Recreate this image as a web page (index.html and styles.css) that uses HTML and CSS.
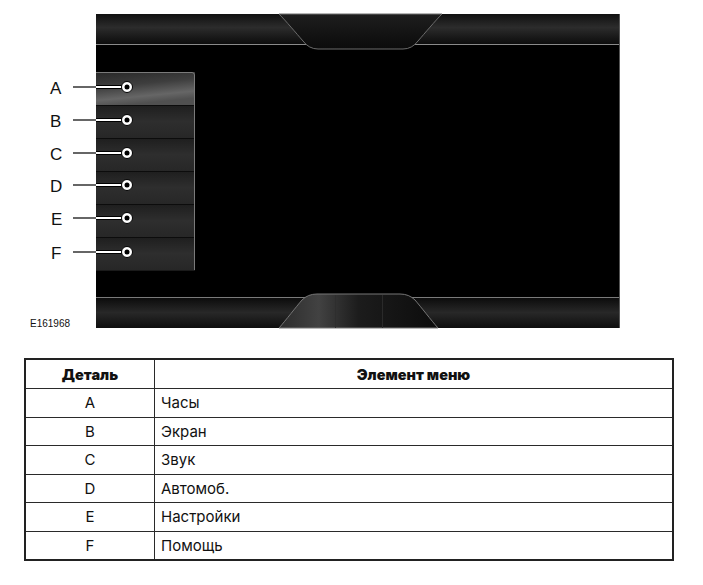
FILE: index.html
```html
<!DOCTYPE html>
<html>

<head>
  <meta charset="utf-8">
  <title>Меню</title>
  <link rel="stylesheet" href="styles.css">
</head>

<body>
  <div class="figure">
    <svg class="screen" width="703" height="340" viewBox="0 0 703 340">
      <defs>
        <linearGradient id="bar-top" x1="0" y1="0" x2="0" y2="1">
          <stop offset="0" stop-color="#101010" />
          <stop offset="0.45" stop-color="#2c2c2c" />
          <stop offset="1" stop-color="#0c0c0c" />
        </linearGradient>
        <linearGradient id="bar-bottom" x1="0" y1="0" x2="0" y2="1">
          <stop offset="0" stop-color="#0a0a0a" />
          <stop offset="0.5" stop-color="#282828" />
          <stop offset="1" stop-color="#0e0e0e" />
        </linearGradient>
        <linearGradient id="notch-top" x1="0" y1="0" x2="0" y2="1">
          <stop offset="0" stop-color="#1e1e1e" />
          <stop offset="1" stop-color="#0b0b0b" />
        </linearGradient>
        <linearGradient id="notch-bottom" x1="0" y1="0" x2="1" y2="0">
          <stop offset="0" stop-color="#2c2c2c" />
          <stop offset="0.25" stop-color="#424242" />
          <stop offset="0.5" stop-color="#1c1c1c" />
          <stop offset="1" stop-color="#0c0c0c" />
        </linearGradient>
        <linearGradient id="row-on" x1="0" y1="0" x2="0.3" y2="1">
          <stop offset="0" stop-color="#282828" />
          <stop offset="0.45" stop-color="#3e3e3e" />
          <stop offset="0.8" stop-color="#666" />
          <stop offset="1" stop-color="#505050" />
        </linearGradient>
        <linearGradient id="row" x1="0" y1="0" x2="0" y2="1">
          <stop offset="0" stop-color="#1e1e1e" />
          <stop offset="0.5" stop-color="#2e2e2e" />
          <stop offset="1" stop-color="#272727" />
        </linearGradient>
      </defs>

      <!-- display -->
      <rect x="96" y="14" width="524" height="314" fill="#000" />
      <rect x="96" y="14" width="524" height="30" fill="url(#bar-top)" />
      <line x1="96" y1="44.5" x2="620" y2="44.5" stroke="#8a8a8a" />
      <rect x="96" y="297" width="524" height="31" fill="url(#bar-bottom)" />
      <line x1="96" y1="297.5" x2="620" y2="297.5" stroke="#7a7a7a" />
      <line x1="619.5" y1="14" x2="619.5" y2="328" stroke="#555" />

      <path d="M279 14 C286 21 296 33 303 41 Q309 49 318 49 L403 49 Q412 49 418 41 C425 33 435 21 442 14 Z"
        fill="url(#notch-top)" stroke="#6c6c6c" />
      <path d="M279 328 C286 320 296 307 302 300 Q308 294 317 294 L400 294 Q409 294 415 300 C421 307 431 320 438 328 Z"
        fill="url(#notch-bottom)" stroke="#767676" />
      <line x1="335.5" y1="295" x2="335.5" y2="328" stroke="#2e2e2e" />
      <line x1="382.5" y1="295" x2="382.5" y2="328" stroke="#2a2a2a" />

      <!-- menu panel -->
      <rect x="96" y="72" width="99" height="33" fill="url(#row-on)" />
      <rect x="96" y="105" width="99" height="33" fill="url(#row)" />
      <rect x="96" y="138" width="99" height="33" fill="url(#row)" />
      <rect x="96" y="171" width="99" height="33" fill="url(#row)" />
      <rect x="96" y="204" width="99" height="33" fill="url(#row)" />
      <rect x="96" y="237" width="99" height="33" fill="url(#row)" />
      <g stroke="#0c0c0c">
        <line x1="96" y1="105.5" x2="195" y2="105.5" />
        <line x1="96" y1="138.5" x2="195" y2="138.5" />
        <line x1="96" y1="171.5" x2="195" y2="171.5" />
        <line x1="96" y1="204.5" x2="195" y2="204.5" />
        <line x1="96" y1="237.5" x2="195" y2="237.5" />
      </g>
      <path d="M96 72.5 L192 72.5 Q194.5 72.5 194.5 75 L194.5 270" fill="none" stroke="#7a7a7a" />
      <line x1="96" y1="270.5" x2="195" y2="270.5" stroke="#1a1a1a" />

      <!-- callouts -->
      <g class="callout" transform="translate(0 87)">
        <text x="50" y="6.5">A</text>
        <line class="lead" x1="73" y1="0" x2="96" y2="0" />
        <line class="halo" x1="96" y1="0" x2="122" y2="0" />
        <line class="core" x1="96" y1="0" x2="122" y2="0" />
        <circle class="ring" cx="127" cy="0" r="5.5" />
        <circle class="pin" cx="127" cy="0" r="2.5" />
      </g>
      <g class="callout" transform="translate(0 120)">
        <text x="50" y="6.5">B</text>
        <line class="lead" x1="73" y1="0" x2="96" y2="0" />
        <line class="halo" x1="96" y1="0" x2="122" y2="0" />
        <line class="core" x1="96" y1="0" x2="122" y2="0" />
        <circle class="ring" cx="127" cy="0" r="5.5" />
        <circle class="pin" cx="127" cy="0" r="2.5" />
      </g>
      <g class="callout" transform="translate(0 153)">
        <text x="50" y="6.5">C</text>
        <line class="lead" x1="73" y1="0" x2="96" y2="0" />
        <line class="halo" x1="96" y1="0" x2="122" y2="0" />
        <line class="core" x1="96" y1="0" x2="122" y2="0" />
        <circle class="ring" cx="127" cy="0" r="5.5" />
        <circle class="pin" cx="127" cy="0" r="2.5" />
      </g>
      <g class="callout" transform="translate(0 185)">
        <text x="50" y="6.5">D</text>
        <line class="lead" x1="73" y1="0" x2="96" y2="0" />
        <line class="halo" x1="96" y1="0" x2="122" y2="0" />
        <line class="core" x1="96" y1="0" x2="122" y2="0" />
        <circle class="ring" cx="127" cy="0" r="5.5" />
        <circle class="pin" cx="127" cy="0" r="2.5" />
      </g>
      <g class="callout" transform="translate(0 218)">
        <text x="51" y="6.5">E</text>
        <line class="lead" x1="73" y1="0" x2="96" y2="0" />
        <line class="halo" x1="96" y1="0" x2="122" y2="0" />
        <line class="core" x1="96" y1="0" x2="122" y2="0" />
        <circle class="ring" cx="127" cy="0" r="5.5" />
        <circle class="pin" cx="127" cy="0" r="2.5" />
      </g>
      <g class="callout" transform="translate(0 252)">
        <text x="51" y="6.5">F</text>
        <line class="lead" x1="73" y1="0" x2="96" y2="0" />
        <line class="halo" x1="96" y1="0" x2="122" y2="0" />
        <line class="core" x1="96" y1="0" x2="122" y2="0" />
        <circle class="ring" cx="127" cy="0" r="5.5" />
        <circle class="pin" cx="127" cy="0" r="2.5" />
      </g>

      <text class="ref" x="30" y="327">E161968</text>
    </svg>
  </div>

  <table class="legend">
    <thead>
      <tr>
        <th class="col-part">Деталь</th>
        <th>Элемент меню</th>
      </tr>
    </thead>
    <tbody>
      <tr><td class="col-part">A</td><td>Часы</td></tr>
      <tr><td class="col-part">B</td><td>Экран</td></tr>
      <tr><td class="col-part">C</td><td>Звук</td></tr>
      <tr><td class="col-part">D</td><td>Автомоб.</td></tr>
      <tr><td class="col-part">E</td><td>Настройки</td></tr>
      <tr><td class="col-part">F</td><td>Помощь</td></tr>
    </tbody>
  </table>
</body>

</html>
```

FILE: styles.css
```css
body {
  background: white;
  margin: 0;
  color: #111;
  font-family: Inter, "Noto Sans", sans-serif;
}

.figure {
  height: 340px;
}

.screen {
  display: block;
}

.callout text {
  font-family: "Liberation Sans", Arial, sans-serif;
  font-size: 17px;
  fill: #111;
}

.callout .lead {
  stroke: #333;
  stroke-width: 1.5;
}

.callout .halo {
  stroke: #000;
  stroke-width: 4;
}

.callout .core {
  stroke: white;
  stroke-width: 2;
}

.callout .ring {
  fill: white;
  stroke: #000;
  stroke-width: 1;
}

.callout .pin {
  fill: #000;
}

.ref {
  font-family: "Liberation Sans", Arial, sans-serif;
  font-size: 10px;
  fill: #111;
}

.legend {
  margin: 18px 0 0 24px;
  width: 650px;
  border-collapse: collapse;
  border: 2px solid #222;
}

.legend th,
.legend td {
  border: 1.5px solid #2a2a2a;
  padding: 0 6px;
  text-align: left;
}

.legend th {
  height: 28px;
  font-size: 14.5px;
  font-weight: 900;
  text-align: center;
}

.legend td {
  height: 27.5px;
  font-size: 15px;
}

.legend .col-part {
  width: 116px;
  text-align: center;
}
```
